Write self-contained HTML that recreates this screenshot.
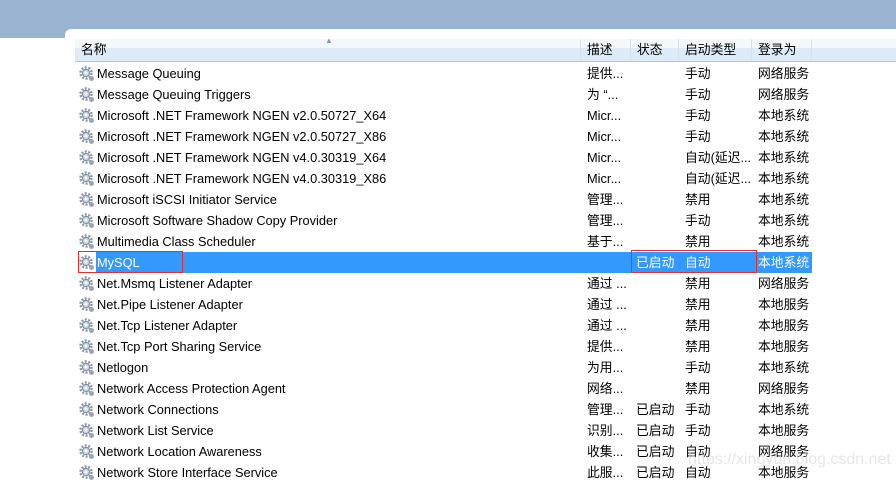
<!DOCTYPE html>
<html><head><meta charset="utf-8"><style>
*{margin:0;padding:0;box-sizing:border-box}
body{width:896px;height:478px;overflow:hidden;background:#fff;font-family:"Liberation Sans","Noto Sans CJK SC",sans-serif;font-size:12.8px;color:#000;position:relative}
#top{position:absolute;left:0;top:0;width:896px;height:38px;background:#9ab3d0}
#panel{position:absolute;left:65px;top:29px;width:831px;height:449px;background:#fff;border-top-left-radius:6px}
#hdr{position:absolute;left:75px;top:39px;width:821px;height:23px;background:linear-gradient(#f3f8fc 0,#f3f8fc 40%,#dcebf7 41%,#dcebf7 100%);border-bottom:1px solid #a9c8e2}
#hdr div{position:absolute;top:0;height:22px;line-height:22px;padding-left:6px;border-right:1px solid #d4e1ee}
.row{position:absolute;left:75px;height:21px;width:740px;line-height:21px}
.row span{position:absolute;top:0;white-space:nowrap}
.ic{position:absolute;left:4px;top:3px;width:16px;height:16px}
.sel{background:#3399ff;color:#fff}
.box{position:absolute;border:1px solid #e03030}
#wm{position:absolute;left:688px;top:451px;font-size:16px;color:rgba(210,210,210,0.55);font-family:"Liberation Sans",sans-serif}
</style></head><body>
<div id="top"></div><div id="panel"></div>
<div id="hdr">
<div style="left:0;width:506px">名称</div>
<div style="left:506px;width:50px">描述</div>
<div style="left:556px;width:48px">状态</div>
<div style="left:604px;width:73px">启动类型</div>
<div style="left:677px;width:60px">登录为</div>
<div style="left:737px;width:84px;border:none"></div>
<span style="position:absolute;left:250px;top:-3px;font-size:8px;color:#7a9cc0">▲</span>
</div>
<svg width="0" height="0" style="position:absolute"><defs>
<g id="g"><circle cx="7" cy="7" r="5.5" fill="none" stroke="#8a98a8" stroke-width="2.5" stroke-dasharray="2 1.5"/><circle cx="7" cy="7" r="3.6" fill="#c8d2dc" stroke="#7d8b9a" stroke-width="1"/><circle cx="7" cy="7" r="1.5" fill="#fff"/><circle cx="12.5" cy="12.5" r="2.5" fill="#9aa6b2"/></g>
</defs></svg>
<div id="rows"></div>
<script>
var d=[
["Message Queuing","提供...","","手动","网络服务"],
["Message Queuing Triggers","为 “...","","手动","网络服务"],
["Microsoft .NET Framework NGEN v2.0.50727_X64","Micr...","","手动","本地系统"],
["Microsoft .NET Framework NGEN v2.0.50727_X86","Micr...","","手动","本地系统"],
["Microsoft .NET Framework NGEN v4.0.30319_X64","Micr...","","自动(延迟...","本地系统"],
["Microsoft .NET Framework NGEN v4.0.30319_X86","Micr...","","自动(延迟...","本地系统"],
["Microsoft iSCSI Initiator Service","管理...","","禁用","本地系统"],
["Microsoft Software Shadow Copy Provider","管理...","","手动","本地系统"],
["Multimedia Class Scheduler","基于...","","禁用","本地系统"],
["MySQL","","已启动","自动","本地系统"],
["Net.Msmq Listener Adapter","通过 ...","","禁用","网络服务"],
["Net.Pipe Listener Adapter","通过 ...","","禁用","本地服务"],
["Net.Tcp Listener Adapter","通过 ...","","禁用","本地服务"],
["Net.Tcp Port Sharing Service","提供...","","禁用","本地服务"],
["Netlogon","为用...","","手动","本地系统"],
["Network Access Protection Agent","网络...","","禁用","网络服务"],
["Network Connections","管理...","已启动","手动","本地系统"],
["Network List Service","识别...","已启动","手动","本地服务"],
["Network Location Awareness","收集...","已启动","自动","网络服务"],
["Network Store Interface Service","此服...","已启动","自动","本地服务"]];
var h="";
d.forEach(function(r,i){
var t=63+21*i;
h+='<div class="row" style="top:'+t+'px">'+(i==9?'<div class="sel" style="position:absolute;left:21px;top:0;width:716px;height:21px"></div>':'')+
'<svg class="ic" viewBox="0 0 16 16"><use href="#g"/></svg>'+
'<span style="left:22px'+(i==9?';color:#fff':'')+'">'+r[0]+'</span>'+
'<span style="left:512px">'+r[1]+'</span>'+
'<span style="left:561px'+(i==9?';color:#fff':'')+'">'+r[2]+'</span>'+
'<span style="left:610px'+(i==9?';color:#fff':'')+'">'+r[3]+'</span>'+
'<span style="left:683px'+(i==9?';color:#fff':'')+'">'+r[4]+'</span></div>';
});
document.getElementById("rows").innerHTML=h;
</script>
<div class="box" style="left:78px;top:251px;width:105px;height:22px"></div>
<div class="box" style="left:631px;top:250px;width:126px;height:23px"></div>
<div id="wm">https://xingyun.blog.csdn.net</div>
</body></html>
